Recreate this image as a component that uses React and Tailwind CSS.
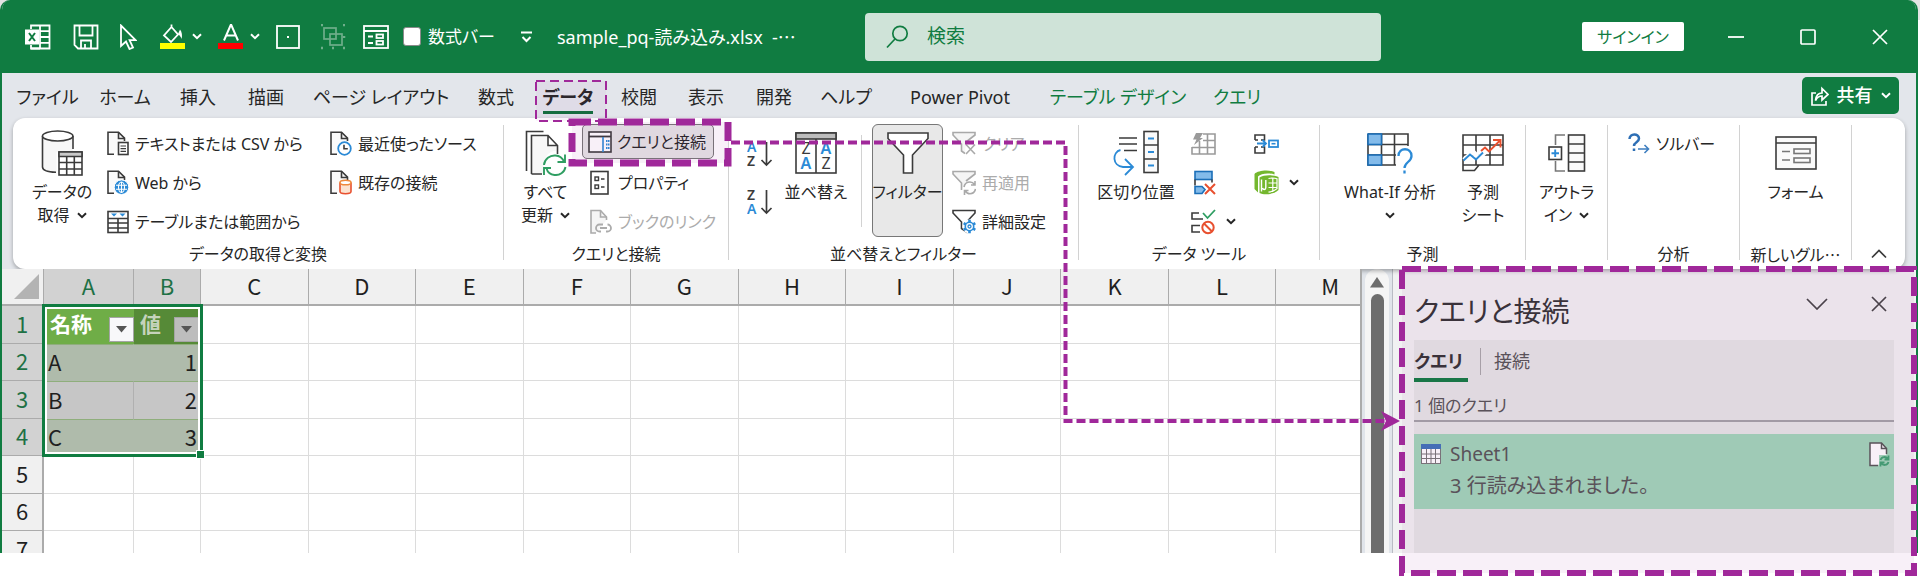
import React from "react";

const INK = "#3b3b3b";
const BLUE = "#2b8ad6";
const ORANGE = "#e8502f";
const PURPLE = "#a0289a";

/* ---------- shared drawing helpers ---------- */

function Svg({ w, h, children, className = "" }) {
  return (
    <svg
      width={w}
      height={h}
      viewBox={`0 0 ${w} ${h}`}
      fill="none"
      stroke={INK}
      strokeWidth="1.6"
      className={`block shrink-0 ${className}`}
      aria-hidden="true"
    >
      {children}
    </svg>
  );
}

function Chevron({ className = "" }) {
  return (
    <svg width="10" height="7" viewBox="0 0 10 7" fill="none" stroke="currentColor" strokeWidth="2" className={`inline-block shrink-0 ${className}`} aria-hidden="true">
      <path d="M1 1.2l4 4 4-4" />
    </svg>
  );
}

function DocOutline() {
  return (
    <>
      <path d="M7 23.2H1V1.2h10.5l6 6V10" fill="#fafafa" />
      <path d="M11.500 1.200V7.500H17.500" />
    </>
  );
}

/* ---------- title bar icons ---------- */

const ExcelIcon = () => (
  <Svg w={26} h={26}>
    <g stroke="#fff" strokeWidth="1.8">
      <path d="M6 5V1.500h18.500v23H6V21" />
      <path d="M15 1.500v23M15 7.200h9.500M15 13h9.500M15 18.800h9.500M6 24.500h9" />
      <rect x="0" y="5.500" width="14" height="15" fill="#fff" stroke="none" />
      <path d="M4 9l6 8M10 9l-6 8" stroke="#107c41" strokeWidth="2" />
    </g>
  </Svg>
);
const SaveIcon = () => (
  <Svg w={26} h={26}>
    <path d="M1.500 1.500h23v23H5l-3.500-3.500zM6.500 1.500v10h13v-10M8 24.500v-8h10v8M12 24v-4" stroke="#fff" strokeWidth="1.800" />
  </Svg>
);
const CursorIcon = () => (
  <Svg w={18} h={26}>
    <path d="M2 1.500v20.500l5-4.500 3.500 7.500 3.500-1.500-3.400-7.400h6z" stroke="#fff" strokeWidth="1.800" />
  </Svg>
);
const BucketIcon = () => (
  <Svg w={26} h={26}>
    <path d="M11.500 3L4 11.500l7 6.500 7-7.500zM11.500 3V0.500" stroke="#fff" strokeWidth="1.800" />
    <path d="M18 10l2-4.500c2 2 2.500 6.500 1.500 9.500-.5-2-2-4-3.500-5z" fill="#fff" stroke="none" />
    <rect x="0" y="19" width="25" height="6" fill="#ff0" stroke="none" />
  </Svg>
);
const FontColorIcon = () => (
  <Svg w={26} h={26}>
    <path d="M6 16.500L12.700 1h.600L20 16.500M8.200 11.500h9.600" stroke="#fff" strokeWidth="2" />
    <rect x="0" y="19" width="25" height="6" fill="#f00" stroke="none" />
  </Svg>
);
const CellIcon = () => (
  <Svg w={24} h={24}>
    <rect x="1" y="1" width="22" height="22" stroke="#fff" strokeWidth="1.800" />
    <rect x="11" y="11" width="2" height="2" fill="#fff" stroke="none" />
  </Svg>
);
const GroupIcon = () => (
  <Svg w={26} h={26}>
    <g stroke="#6fae8b" strokeWidth="1.700">
      <rect x="4" y="4" width="12" height="11" />
      <rect x="10" y="10" width="12" height="11" />
      <path d="M1 1h2M23 1h2M1 24h2M23 24h2M12 24h2M24 12v2" strokeWidth="2.500" />
    </g>
  </Svg>
);
const FormTinyIcon = () => (
  <Svg w={26} h={24}>
    <g stroke="#fff" strokeWidth="1.800">
      <rect x="1" y="1" width="24" height="22" />
      <path d="M1 6h24M5 11.500h5M5 18h5" />
      <rect x="13.500" y="9.500" width="6.500" height="3.500" />
      <rect x="13.500" y="16" width="6.500" height="3.500" />
    </g>
  </Svg>
);

/* ---------- ribbon icons ---------- */

const DatabaseIcon = () => (
  <Svg w={42} h={46}>
    <path d="M1.500 6v31c0 3.500 6 5.300 14 5.300V22H32V6" fill="#f7f7f7" stroke="none" />
    <path d="M1.500 6v31c0 3 5.500 5 13.500 5.300M32 6v13" />
    <ellipse cx="16.700" cy="6" rx="15.200" ry="5" fill="#fff" />
    <rect x="18" y="22" width="23" height="23" fill="#fff" />
    <path d="M18 22h23v4.500H18z" fill="#c9c9c9" />
    <path d="M18 32.500h23M18 39h23M25.700 26.500V45M33.300 26.500V45" />
  </Svg>
);
const DocTextIcon = () => (
  <Svg w={22} h={25}>
    <DocOutline />
    <rect x="11.500" y="11.500" width="9.500" height="12" fill="#fff" />
    <path d="M13.500 15h5.500M13.500 17.700h5.500M13.500 20.400h5.500" strokeWidth="1.200" />
  </Svg>
);
const DocWebIcon = () => (
  <Svg w={22} h={25}>
    <DocOutline />
    <circle cx="14.500" cy="17.200" r="7.300" fill={BLUE} stroke="#fff" strokeWidth="1" />
    <ellipse cx="14.500" cy="17.200" rx="3" ry="5.200" stroke="#fff" strokeWidth="1.100" />
    <path d="M9 15.300h11M9 19.200h11M14.500 12v10.400" stroke="#fff" strokeWidth="1.100" />
  </Svg>
);
const TableRangeIcon = () => (
  <Svg w={22} h={24}>
    <rect x="1" y="1.500" width="20" height="21" fill="#fff" />
    <path d="M1 8.500h20M1 13h20M1 18h20M11 8.500v14" />
    <path d="M4 3.500h6L7 6.500zM12.500 3.500h6l-3 3z" fill={BLUE} stroke="none" />
  </Svg>
);
const DocClockIcon = () => (
  <Svg w={22} h={25}>
    <DocOutline />
    <circle cx="14.500" cy="17.500" r="6.300" fill="#fff" stroke={BLUE} strokeWidth="1.800" />
    <path d="M14 13.800v4h3.800" />
  </Svg>
);
const DocDbIcon = () => (
  <Svg w={22} h={25}>
    <DocOutline />
    <path d="M10 12.500v9c0 3 11 3 11 0v-9" fill="#fbe3d0" stroke={ORANGE} />
    <ellipse cx="15.500" cy="12.500" rx="5.500" ry="2.300" fill="#fff" stroke="#ee8a3c" />
  </Svg>
);
const RefreshAllIcon = () => (
  <Svg w={42} h={46}>
    <path d="M8 7h15v9h8v5c-8 0-13 6-12 22H8z" fill="#f7f7f7" stroke="none" />
    <path d="M1.500 41V1.500h17M6.500 44V5.500H23l9.500 10V24M6.500 44H17M23 5.500v10h9.500" />
    <g stroke="#2f9e62" strokeWidth="1.900">
      <path d="M19 35c.5-6 6-10 11.500-9.500 4 .3 7 2.500 8.500 6M40 24.500v7.500h-7.500" />
      <path d="M40.500 37c-1 5.500-6 8.500-11 8-4-.4-7-3-8-6.500M19 45v-7h7" />
    </g>
  </Svg>
);
const QueryPaneIcon = () => (
  <Svg w={24} h={22}>
    <rect x="1" y="1" width="22" height="20" fill="#fff" />
    <path d="M1 5.500h22" strokeWidth="1.800" />
    <path d="M15 6v15" stroke={BLUE} />
    <path d="M18 10h3.500M18 13.500h3.500M18 17h3.500" stroke={BLUE} strokeWidth="1.800" strokeDasharray="1.500 .5" />
  </Svg>
);
const PropertiesIcon = () => (
  <Svg w={24} h={26}>
    <rect x="3" y="1.500" width="17" height="22.500" fill="#fff" />
    <rect x="7" y="7" width="3.500" height="3.500" strokeWidth="1.400" />
    <rect x="7" y="15" width="3.500" height="3.500" strokeWidth="1.400" />
    <path d="M13 9h3.500M13 17h3.500" />
  </Svg>
);
const BookLinkIcon = () => (
  <Svg w={24} h={26}>
    <g stroke="#ababab">
      <path d="M8 24H3V1.500h9.500l6 6.500V11" fill="#f5f5f5" />
      <path d="M12.500 1.500V8h6" />
      <path d="M13 22.500h-1.500a3.500 3.500 0 010-7H15M18 22.500h1.500a3.500 3.500 0 000-7M12 19h7" strokeWidth="1.800" />
    </g>
  </Svg>
);
const SortAZ = ({ flip = false }) => (
  <svg width="26" height="34" viewBox="0 0 26 34" fill="none" className="block" aria-hidden="true">
    <text x="0" y="15" fontSize="14" fontFamily="Noto Sans, sans-serif" fontWeight="600" fill={flip ? INK : BLUE}>{flip ? "Z" : "A"}</text>
    <text x="0" y="29" fontSize="14" fontFamily="Noto Sans, sans-serif" fontWeight="600" fill={flip ? BLUE : INK}>{flip ? "A" : "Z"}</text>
    <path d="M19.500 5v22.500M14.500 23l5 5 5-5" stroke={INK} strokeWidth="1.700" />
  </svg>
);
const SortDialogIcon = () => (
  <svg width="42" height="42" viewBox="0 0 42 42" fill="none" stroke={INK} strokeWidth="1.600" className="block" aria-hidden="true">
    <rect x="1" y="1" width="40" height="40" fill="#fff" />
    <rect x="1" y="1" width="40" height="6" fill="#bdbdbd" />
    <path d="M21 7v34" />
    <g stroke="none" fontSize="16" fontFamily="Noto Sans, sans-serif" textAnchor="middle">
      <text x="11" y="22" fill={INK}>Z</text>
      <text x="11" y="37" fill={BLUE} fontWeight="600">A</text>
      <text x="31" y="22" fill={BLUE} fontWeight="600">A</text>
      <text x="31" y="37" fill={INK}>Z</text>
    </g>
  </svg>
);
const FunnelBig = () => (
  <Svg w={42} h={42}>
    <path d="M1 1h40v5.500L25.500 23v18h-9V23L1 6.500z" fill="#fff" />
  </Svg>
);
const funnelPath = "M1 1.500h22v2.500l-8.500 9V23l-5-3.500V13L1 4z";
const FunnelClear = () => (
  <Svg w={24} h={25}>
    <path d="M14 11l9-7V1.500H1V4l8.500 9v7l3.500 2.500" stroke="#a9a9a9" fill="#f5f5f5" />
    <path d="M14 13.500l9 9.500M23 13.500L14 23" stroke="#a9a9a9" />
  </Svg>
);
const FunnelReapply = () => (
  <Svg w={24} h={25}>
    <g stroke="#a9a9a9">
      <path d="M14 11l9-7V1.500H1V4l8.500 9v7" fill="#f5f5f5" />
      <path d="M12 17c.5-3 3-5 6-5 2 0 3.500 1 4.500 2.500M23 11v4h-4M23.500 19c-.6 3-3 4.700-5.500 4.700-2 0-3.700-1-4.700-2.700M12.500 25v-4.500h4" />
    </g>
  </Svg>
);
const FunnelGear = () => (
  <Svg w={24} h={25}>
    <path d={funnelPath} fill="#fff" />
    <circle cx="17.500" cy="17.500" r="7" fill="#fff" stroke="none" />
    <circle cx="17.500" cy="17.500" r="4.200" stroke={BLUE} strokeWidth="1.600" />
    <circle cx="17.500" cy="17.500" r="1.500" stroke={BLUE} strokeWidth="1.300" />
    <path d="M17.500 10.800v2.400M17.500 21.800v2.400M11.700 14.100l2 1.200M21.300 19.700l2 1.200M11.700 20.900l2-1.200M21.300 15.300l2-1.200" stroke={BLUE} strokeWidth="2.600" />
  </Svg>
);
const TextToColumnsIcon = () => (
  <Svg w={46} h={46}>
    <rect x="31" y="1.500" width="14" height="41" fill="#fafafa" />
    <path d="M31 15h14M31 29h14M6 8h18M6 14h18M11 20.500h13" />
    <path d="M35 8.500h6M35 22h6M35 35.500h6" stroke={BLUE} strokeWidth="1.800" />
    <path d="M7.500 20C-1 22-1 36 10 37h9M12 29l8 8-8 8" stroke={BLUE} strokeWidth="1.800" />
  </Svg>
);
const FlashFillIcon = () => (
  <Svg w={25} h={24}>
    <g stroke="#9a9a9a">
      <path d="M12 2h12v20H1V15M1 15.500h23M8.500 9v13M16.500 2v20M12 8.500h12" fill="none" />
      <path d="M5 1h7L9 6h3L3 13l2.500-5.500H2z" fill="#9a9a9a" stroke="none" />
    </g>
  </Svg>
);
const RemoveDupIcon = () => (
  <Svg w={25} h={26}>
    <rect x="4" y="1.500" width="17" height="8" fill="#83bbea" stroke="#1b6fb8" />
    <path d="M4 9.500v6M21 9.500v3" />
    <path d="M4 16.500h7l3 3-3 4H4z" fill="#83bbea" stroke="#1b6fb8" />
    <path d="M14 14l10 10M24 14L14 24" stroke={ORANGE} strokeWidth="2" />
  </Svg>
);
const ValidationIcon = () => (
  <Svg w={25} h={26}>
    <path d="M8 4H1v6h11M9 16.500H1v6.500h8" />
    <path d="M12 4l4.500 5L24 1" stroke="#2f9e62" strokeWidth="1.800" />
    <circle cx="17" cy="18.500" r="5.700" stroke={ORANGE} strokeWidth="2" />
    <path d="M13 14.500l8 8" stroke={ORANGE} strokeWidth="2" />
  </Svg>
);
const ConsolidateIcon = () => (
  <Svg w={25} h={22}>
    <path d="M1 7V2h9.500v5H7M1 14v6h9.500v-6H7M1 7h3M1 14h3" />
    <path d="M3 10.500h8.500M8.500 7l3.500 3.500L8.500 14" stroke={BLUE} strokeWidth="1.800" />
    <rect x="15" y="7.500" width="9" height="6.500" stroke={BLUE} strokeWidth="1.800" />
    <path d="M17.500 10.700h4" stroke={BLUE} />
  </Svg>
);
const DataModelIcon = () => (
  <Svg w={25} h={25}>
    <path d="M0.500 4C4 .5 14-.5 20.500 2v2.500C14 2.500 7 3.500 4 6.500v16L0.500 19z" fill="#74b72e" stroke="none" />
    <path d="M5.500 7.500C10 4.500 19 4.500 24.500 7v13c-4 4-14 5.500-19 3z" fill="#74b72e" stroke="none" />
    <path d="M14.500 8.500c3-.7 6-.7 8.500.2v10c-2 2-5 3-8.500 3.500M14.500 13h8.500M14.500 17.500h8.500M18.800 8v14" stroke="#fff" strokeWidth="1.200" />
    <path d="M7.500 9.500v12M11.800 10v7.500c0 2.500-2.800 2.500-3.300.5" stroke="#fff" strokeWidth="1.400" />
  </Svg>
);
const WhatIfIcon = () => (
  <Svg w={46} h={42}>
    <path d="M1 2h40v12M1 2v31h29M1 12.500h40M1 23h28M14.500 2v31M27.500 2v31" />
    <rect x="1" y="2" width="13.500" height="10.500" fill="#83bbea" stroke="#1b6fb8" />
    <rect x="1" y="23" width="13.500" height="10" fill="#83bbea" stroke="#1b6fb8" />
    <rect x="29" y="15" width="17" height="27" fill="#fff" stroke="none" />
    <path d="M31.500 24c0-9 13-9 13 0 0 6-7 6-7 12M37.500 38.500v3" stroke={BLUE} strokeWidth="2.300" />
  </Svg>
);
const ForecastIcon = () => (
  <Svg w={42} h={38}>
    <path d="M1 1h40v30H17l-4.500 5.500H1zM1 31h16M1 11h40M1 21h40M14 1v30M28 1v30" fill="none" />
    <path d="M2 26l9-8 6 6 6-6" stroke="#fff" strokeWidth="5" />
    <path d="M1.500 26.500l6.500-6 6 5 7-7" stroke={BLUE} strokeWidth="1.900" />
    <path d="M19 17l4-3.500 4 4L38 6.500M31 6h7.500v7.500" stroke={ORANGE} strokeWidth="1.900" />
  </Svg>
);
const OutlineIcon = () => (
  <Svg w={38} h={38}>
    <rect x="20.500" y="1" width="16" height="36" fill="#fafafa" />
    <path d="M20.500 10h16M20.500 19h16M20.500 28h16" />
    <path d="M17 1H7.500v10M7.500 27v10H17" stroke="#777" />
    <rect x="1" y="13" width="12.500" height="12.500" />
    <path d="M7.200 15.500v7.500M3.500 19.200H11" stroke={BLUE} strokeWidth="1.900" />
  </Svg>
);
const SolverIcon = () => (
  <Svg w={22} h={22}>
    <path d="M1.500 6c0-6 9.500-6 9.500-.5C11 9.500 6 9 6 13M6 15.500v2.500" stroke="#2e6fb5" strokeWidth="2.500" />
    <path d="M10 16h10M16.500 12l4 4-4 4" stroke="#3f7fc0" strokeWidth="1.600" />
  </Svg>
);
const FormIcon = () => (
  <Svg w={42} h={34}>
    <rect x="1" y="1" width="40" height="32" fill="#fafafa" />
    <path d="M1 7h40" />
    <path d="M7 15.500h8M7 24h8" stroke="#777" />
    <rect x="19" y="13" width="16" height="4.500" stroke="#777" />
    <rect x="19" y="22" width="16" height="4.500" stroke="#777" />
  </Svg>
);

/* ---------- title bar ---------- */

function IconButton({ label, className = "", children }) {
  return (
    <button type="button" aria-label={label} className={`flex shrink-0 items-center ${className}`}>
      {children}
    </button>
  );
}

function TitleBar() {
  return (
    <header className="flex h-[73px] items-center bg-[#107c41] pl-[23px] text-white">
      <div className="flex w-[840px] shrink-0 items-center">
        <IconButton label="Excel" className="w-[48px]"><ExcelIcon /></IconButton>
        <IconButton label="上書き保存" className="w-[46px]"><SaveIcon /></IconButton>
        <IconButton label="選択" className="w-[41px]"><CursorIcon /></IconButton>
        <IconButton label="塗りつぶしの色" className="w-[58px] gap-[6px]"><BucketIcon /><Chevron /></IconButton>
        <IconButton label="フォントの色" className="w-[58px] gap-[6px]"><FontColorIcon /><Chevron /></IconButton>
        <IconButton label="罫線" className="w-[44px]"><CellIcon /></IconButton>
        <IconButton label="グループ化" className="w-[43px]"><GroupIcon /></IconButton>
        <IconButton label="フォーム" className="w-[40px]"><FormTinyIcon /></IconButton>
        <label className="flex w-[118px] items-center gap-[7px] text-[17px] leading-6">
          <input type="checkbox" className="h-[19px] w-[18px] appearance-none rounded-[3px] border border-[#8a8a8a] bg-white" />
          <span>数式バー</span>
        </label>
        <IconButton label="カスタマイズ" className="w-[36px]">
          <svg width="11" height="12" viewBox="0 0 11 12" fill="none" stroke="#fff" strokeWidth="2" aria-hidden="true">
            <path d="M0 1.500h11M1.500 6l4 4 4-4" />
          </svg>
        </IconButton>
        <span className="whitespace-pre text-[18px] leading-6">
          sample_pq-読み込み.xlsx{"  "}-<span lang="ja" className="font-['Noto_Sans_CJK_JP',sans-serif]">⋯</span>
        </span>
      </div>
      <label className="flex h-12 w-[516px] items-center rounded-[4px] bg-[#cfe3d8] pl-[21px] text-[#107c41]">
        <svg width="23" height="24" viewBox="0 0 23 24" fill="none" stroke="#107c41" strokeWidth="1.700" aria-hidden="true">
          <circle cx="14" cy="8.500" r="7.200" />
          <path d="M9 14L1 22.500" />
        </svg>
        <input
          type="text"
          aria-label="検索"
          placeholder="検索"
          className="ml-[18px] min-w-0 flex-1 bg-transparent text-[19px] placeholder:text-[#107c41] placeholder:opacity-100 focus:outline-none"
        />
      </label>
      <div className="flex flex-1 items-center justify-end">
        <button type="button" className="h-[29px] w-[102px] rounded-[2px] bg-white text-[16px] leading-6 text-[#107c41]">サインイン</button>
        <IconButton label="最小化" className="ml-4 w-[72px] justify-center">
          <svg width="16" height="16" viewBox="0 0 16 16" stroke="#fff" strokeWidth="1.800" aria-hidden="true"><path d="M0 8h16" /></svg>
        </IconButton>
        <IconButton label="最大化" className="w-[72px] justify-center">
          <svg width="16" height="16" viewBox="0 0 16 16" fill="none" stroke="#fff" strokeWidth="1.700" aria-hidden="true"><rect x="1" y="1" width="14" height="14" rx="1" /></svg>
        </IconButton>
        <IconButton label="閉じる" className="w-[72px] justify-center">
          <svg width="16" height="16" viewBox="0 0 16 16" stroke="#fff" strokeWidth="1.700" aria-hidden="true"><path d="M1 1l14 14M15 1L1 15" /></svg>
        </IconButton>
      </div>
    </header>
  );
}

/* ---------- ribbon tabs ---------- */

const TABS = [
  { name: "ファイル", w: "w-[71px]" },
  { name: "ホーム", w: "w-[84px]" },
  { name: "挿入", w: "w-[62px]" },
  { name: "描画", w: "w-[74px]" },
  { name: "ページ レイアウト", w: "w-[156px]" },
  { name: "数式", w: "w-[74px]" },
  { name: "データ", w: "w-[70px]", active: true },
  { name: "校閲", w: "w-[72px]" },
  { name: "表示", w: "w-[62px]" },
  { name: "開発", w: "w-[74px]" },
  { name: "ヘルプ", w: "w-[70px]" },
  { name: "Power Pivot", w: "w-[158px]" },
  { name: "テーブル デザイン", w: "w-[158px]", context: true },
  { name: "クエリ", w: "w-[80px]", context: true },
];

function RibbonTabs() {
  return (
    <nav className="flex h-[45px] items-center justify-between pl-[10px] pr-[17px]">
      <div role="tablist" className="flex pt-[5px]">
        {TABS.map((t) => (
          <button
            key={t.name}
            type="button"
            role="tab"
            aria-selected={!!t.active}
            className={`flex shrink-0 justify-center whitespace-nowrap text-[18px] leading-7 ${t.w} ${t.context ? "text-[#107c41]" : "text-[#262626]"}`}
          >
            <span className={t.active ? "border-b-[3px] border-[#0f703b] font-bold" : "border-b-[3px] border-transparent"}>{t.name}</span>
          </button>
        ))}
      </div>
      <button type="button" className="flex h-[37px] w-[97px] items-center justify-center gap-2 rounded-[5px] bg-[#107c41] text-[18px] font-medium text-white">
        <svg width="18" height="20" viewBox="0 0 18 20" fill="none" stroke="#fff" strokeWidth="1.700" aria-hidden="true">
          <path d="M5 7H1v12h14v-4" />
          <path d="M4.500 14.500C5 9 8 7 11 7V2.500l6 6-6 5.500v-4c-3 0-5 1.500-6.500 4.500z" />
        </svg>
        共有
        <Chevron />
      </button>
    </nav>
  );
}

/* ---------- ribbon body ---------- */

function Group({ label, w, content = "", children }) {
  return (
    <section className={`flex shrink-0 flex-col ${w}`}>
      <div className={`flex h-[117px] ${content}`}>{children}</div>
      <div className="whitespace-nowrap text-center text-[16px] leading-[26px]">{label}</div>
    </section>
  );
}

const Sep = () => <div className="mt-px h-[135px] w-px shrink-0 bg-[#d2d2d2]" />;

function BigButton({ icon, lines, chevron, w }) {
  return (
    <button type="button" className={`flex shrink-0 flex-col items-center self-start ${w}`}>
      <span className="flex h-[57px] items-center">{icon}</span>
      {lines.map((l, i) => (
        <span key={l} className="flex items-center gap-[7px] whitespace-nowrap text-[16px] leading-[23px]">
          {l}
          {chevron === "inline" && i === lines.length - 1 && <Chevron />}
        </span>
      ))}
      {chevron === "below" && <span className="flex h-[23px] items-center"><Chevron /></span>}
    </button>
  );
}

function SmallButton({ icon, label, chevron, muted, className = "" }) {
  return (
    <button type="button" aria-label={label} className={`flex h-[39px] items-center gap-[6px] whitespace-nowrap text-[16px] ${muted ? "text-[#ababab]" : ""} ${className}`}>
      {icon}
      {label && <span>{label}</span>}
      {chevron && <Chevron />}
    </button>
  );
}

function ToolButton({ icon, name, chevron }) {
  return (
    <button type="button" aria-label={name} className="flex h-[39px] items-center gap-[10px]">
      {icon}
      {chevron && <Chevron />}
    </button>
  );
}

function Ribbon() {
  return (
    <div className="relative ml-[11px] mr-[11px] flex h-[151px] rounded-[12px] bg-white pt-[6px] text-[#262626] shadow-[0_2px_4px_rgba(0,0,0,0.3)]">
      <Group label="データの取得と変換" w="w-[490px]" content="pl-[9px]">
        <BigButton icon={<DatabaseIcon />} lines={["データの", "取得"]} chevron="inline" w="w-[80px]" />
        <div className="ml-[5px] w-[223px]">
          <SmallButton icon={<DocTextIcon />} label="テキストまたは CSV から" />
          <SmallButton icon={<DocWebIcon />} label="Web から" />
          <SmallButton icon={<TableRangeIcon />} label="テーブルまたは範囲から" />
        </div>
        <div>
          <SmallButton icon={<DocClockIcon />} label="最近使ったソース" />
          <SmallButton icon={<DocDbIcon />} label="既存の接続" />
        </div>
      </Group>
      <Sep />
      <Group label="クエリと接続" w="w-[224px]" content="pl-[5px]">
        <BigButton icon={<RefreshAllIcon />} lines={["すべて", "更新"]} chevron="inline" w="w-[73px]" />
        <div>
          <button type="button" className="mb-[4px] flex h-[35px] w-[132px] items-center gap-[5px] whitespace-nowrap rounded-[5px] border border-[#777] bg-[#e6e6e6] pl-[5px] text-[16px]">
            <QueryPaneIcon />
            <span>クエリと接続</span>
          </button>
          <SmallButton icon={<PropertiesIcon />} label="プロパティ" className="pl-[6px]" />
          <SmallButton icon={<BookLinkIcon />} label="ブックのリンク" muted className="pl-[6px]" />
        </div>
      </Group>
      <Sep />
      <Group label="並べ替えとフィルター" w="w-[349px]" content="pl-[18px]">
        <div className="flex flex-col gap-[14px] pt-[13px]">
          <button type="button" aria-label="昇順"><SortAZ /></button>
          <button type="button" aria-label="降順"><SortAZ flip /></button>
        </div>
        <BigButton icon={<SortDialogIcon />} lines={["並べ替え"]} w="ml-[6px] w-[74px]" />
        <div className="ml-2 mt-[11px] h-[92px] w-px bg-[#d2d2d2]" />
        <div className="ml-[10px] h-[113px] w-[71px] shrink-0 rounded-[6px] bg-[#e8e8e8] outline-1 -outline-offset-1 outline-[#777]">
          <BigButton icon={<FunnelBig />} lines={["フィルター"]} w="w-full" />
        </div>
        <div className="ml-[9px]">
          <SmallButton icon={<FunnelClear />} label="クリア" muted />
          <SmallButton icon={<FunnelReapply />} label="再適用" muted />
          <SmallButton icon={<FunnelGear />} label="詳細設定" />
        </div>
      </Group>
      <Sep />
      <Group label="データ ツール" w="w-[240px]" content="pl-3">
        <BigButton icon={<TextToColumnsIcon />} lines={["区切り位置"]} w="w-[90px]" />
        <div className="ml-[10px] w-[63px]">
          <ToolButton icon={<FlashFillIcon />} name="フラッシュ フィル" />
          <ToolButton icon={<RemoveDupIcon />} name="重複の削除" />
          <ToolButton icon={<ValidationIcon />} name="データの入力規則" chevron />
        </div>
        <div>
          <ToolButton icon={<ConsolidateIcon />} name="統合" />
          <ToolButton icon={<DataModelIcon />} name="データ モデル" chevron />
        </div>
      </Group>
      <Sep />
      <Group label="予測" w="w-[205px]" content="pl-[14px]">
        <BigButton icon={<WhatIfIcon />} lines={["What-If 分析"]} chevron="below" w="w-[112px]" />
        <BigButton icon={<ForecastIcon />} lines={["予測", "シート"]} w="ml-[7px] w-[60px]" />
      </Group>
      <Sep />
      <Group label="" w="w-[81px]">
        <BigButton icon={<OutlineIcon />} lines={["アウトラ", "イン"]} chevron="inline" w="w-full" />
      </Group>
      <Sep />
      <Group label="分析" w="w-[131px]" content="pl-5">
        <SmallButton icon={<SolverIcon />} label="ソルバー" />
      </Group>
      <Sep />
      <Group label={<>新しいグル<span lang="ja" className="font-['Noto_Sans_CJK_JP',sans-serif]">⋯</span></>} w="w-[111px]">
        <BigButton icon={<FormIcon />} lines={["フォーム"]} w="w-full" />
      </Group>
      <Sep />
      <div className="flex flex-1 items-end justify-center pb-[10px]">
        <button type="button" aria-label="リボンを折りたたむ">
          <svg width="16" height="10" viewBox="0 0 16 10" fill="none" stroke={INK} strokeWidth="1.700" className="block" aria-hidden="true"><path d="M1 8.500l7-7 7 7" /></svg>
        </button>
      </div>
    </div>
  );
}

/* ---------- worksheet ---------- */

const COLUMNS = ["C", "D", "E", "F", "G", "H", "I", "J", "K", "L", "M"];
const DATA = { 2: ["A", "1"], 3: ["B", "2"], 4: ["C", "3"] };

function HeaderCell({ text, dark }) {
  return (
    <th scope="col" className={`p-0 ${dark ? "bg-[#568a37]" : "bg-[#6fad47]"}`}>
      <div className={`flex h-[37px] items-start justify-between pl-[6px] text-[21px] leading-[33px] ${dark ? "pr-[2px] text-[#c5d3bc]" : "text-white"}`}>
        {text}
        <button
          type="button"
          aria-label={`${text} フィルター`}
          className={`mt-[10px] flex h-[25px] w-[25px] items-center justify-center border border-[#a5a5a5] ${dark ? "bg-[#bdbdbd]" : "bg-[#f8f8fa]"}`}
        >
          <svg width="11" height="7" viewBox="0 0 11 7" className="block" aria-hidden="true"><path d="M0 0h11L5.500 6.500z" fill="#555" /></svg>
        </button>
      </div>
    </th>
  );
}

function Sheet() {
  return (
    <div className="relative h-[284px] min-w-0 flex-1 overflow-hidden border-r-2 border-[#ababab] bg-white font-['Noto_Sans_CJK_JP','Noto_Sans',sans-serif]">
      <table className="w-[calc(100%+24px)] table-fixed border-separate border-spacing-0 text-[22px] leading-[30px] text-[#1f1f1f]">
        <colgroup>
          <col className="w-[42px]" />
          <col className="w-[90px]" />
          <col className="w-[67px]" />
          {COLUMNS.map((c) => <col key={c} />)}
        </colgroup>
        <thead>
          <tr className="h-[37px]">
            <th className="border-b-2 border-r border-[#ababab] bg-[#f0f0f0] p-0">
              <svg width="25" height="25" viewBox="0 0 25 25" className="ml-auto mr-1 block" aria-hidden="true"><path d="M25 0v25H0z" fill="#b3b3b3" /></svg>
            </th>
            {["A", "B"].map((c) => (
              <th key={c} scope="col" className="border-b-2 border-r border-[#ababab] bg-[#d2d2d2] px-0 pb-[3px] pt-0 font-normal text-[#1e7145]">{c}</th>
            ))}
            {COLUMNS.map((c) => (
              <th key={c} scope="col" className="border-b-2 border-r border-[#ababab] bg-[#f0f0f0] px-0 pb-[3px] pt-0 font-normal last:border-r-0">{c}</th>
            ))}
          </tr>
        </thead>
        <tbody>
          {[1, 2, 3, 4, 5, 6, 7].map((r) => {
            const band = r === 3 ? "bg-[#c6c6c6] border-[#b0b0b0]" : "bg-[#afbbab] border-[#afbbab]";
            return (
              <tr key={r} className="h-[37px] odd:h-[38px]">
                <th scope="row" className={`border-b border-r-2 border-[#ababab] px-0 pb-[4px] pt-0 font-normal ${r < 5 ? "bg-[#d2d2d2] text-[#1e7145]" : "bg-[#f0f0f0]"}`}>{r}</th>
                {r === 1 && (<><HeaderCell text="名称" /><HeaderCell text="値" dark /></>)}
                {DATA[r] && (
                  <>
                    <td className={`border-r border-t border-t-[#8fae7c] pb-[4px] pl-1 pr-0 pt-0 ${band}`}>{DATA[r][0]}</td>
                    <td className={`border-t border-t-[#8fae7c] pb-[4px] pl-0 pr-[4px] pt-0 text-right ${band}`}>{DATA[r][1]}</td>
                  </>
                )}
                {r > 4 && (
                  <>
                    <td className="border-b border-r border-[#dcdcdc] p-0" />
                    <td className="border-b border-r border-[#dcdcdc] p-0" />
                  </>
                )}
                {COLUMNS.map((c) => <td key={c} className="border-b border-r border-[#dcdcdc] p-0 last:border-r-0" />)}
              </tr>
            );
          })}
        </tbody>
      </table>
      <div className="pointer-events-none absolute left-[40px] top-[35px] h-[153px] w-[161px] border-[3px] border-[#107c41]">
        <div className="h-full w-full border-2 border-white" />
        <div className="absolute -bottom-[5px] -right-[5px] h-[9px] w-[9px] border border-white bg-[#107c41]" />
      </div>
    </div>
  );
}

function ScrollBar() {
  return (
    <div className="flex w-[31px] shrink-0 justify-center border-r border-[#b9bcc4] bg-[#e0e4ea]">
      <div className="flex w-6 flex-col items-center rounded-t-full bg-[#f5f5f5] pt-2">
        <svg width="14" height="11" viewBox="0 0 14 11" className="block" aria-hidden="true"><path d="M7 0l7 10.500H0z" fill="#6d6d6d" /></svg>
        <div className="mt-[6px] w-[13px] flex-1 rounded-t-full bg-[#6d6d6d]" />
      </div>
    </div>
  );
}

/* ---------- queries pane ---------- */

function QueriesPane() {
  return (
    <aside className="flex w-[523px] shrink-0 flex-col bg-[#f1f1f2] pl-[21px] pr-[22px] text-[#333]">
      <div className="flex h-[71px] items-center justify-between pb-[2px] pt-[14px]">
        <h2 className="text-[28px] leading-10">クエリと接続</h2>
        <div className="flex items-center gap-[43px] pb-[14px] pr-[7px]">
          <button type="button" aria-label="作業ウィンドウ オプション">
            <svg width="22" height="12" viewBox="0 0 22 12" fill="none" stroke="#444" strokeWidth="1.700" className="block" aria-hidden="true"><path d="M1 1l10 10L21 1" /></svg>
          </button>
          <button type="button" aria-label="閉じる">
            <svg width="16" height="16" viewBox="0 0 16 16" stroke="#444" strokeWidth="1.700" className="block" aria-hidden="true"><path d="M1 1l14 14M15 1L1 15" /></svg>
          </button>
        </div>
      </div>
      <div className="flex-1 bg-[#e6e7e6]">
        <div role="tablist" className="flex items-start pt-2 text-[18px] leading-[27px]">
          <button type="button" role="tab" aria-selected="true" className="w-[54px] whitespace-nowrap border-b-4 border-[#107c41] pb-[3px] text-left font-bold">クエリ</button>
          <div className="ml-3 h-[27px] w-px bg-[#a8a8a8]" />
          <button type="button" role="tab" aria-selected="false" className="ml-[13px] text-[#555]">接続</button>
        </div>
        <p className="border-b-2 border-[#a3a3a6] pb-[2px] pt-[12px] text-[17px] leading-6 text-[#555]">1 個のクエリ</p>
        <div className="mt-3 flex h-[75px] items-start bg-[#a0d7b8] pl-[7px] pr-1 pt-2 text-[#555]">
          <svg width="20" height="20" viewBox="0 0 20 20" fill="none" stroke="#777" className="mt-[2px] block shrink-0" aria-hidden="true">
            <rect x="0.500" y="0.500" width="19" height="19" fill="#fff" />
            <rect x="0" y="0" width="20" height="5" fill="#3f74b8" stroke="none" />
            <path d="M1 10h18M1 14.500h18M5.500 5v14M10 5v14M14.500 5v14" />
          </svg>
          <div className="ml-[9px] flex-1">
            <div className="text-[19px] leading-6">Sheet1</div>
            <div className="mt-1 text-[20px] leading-8">3 行読み込まれました。</div>
          </div>
          <svg width="21" height="25" viewBox="0 0 21 25" fill="none" stroke="#555" strokeWidth="1.500" className="block" aria-hidden="true">
            <path d="M9 23.500H1V1h11.500l5 5.500V12" fill="#fff" />
            <path d="M12.500 1v5.500h5" />
            <rect x="10" y="13" width="11" height="12" fill="#a0d7b8" stroke="none" />
            <path d="M11.500 18c1-3.500 5.500-4 7.500-1M19.500 13.500v4h-4M19.500 20c-1 3.500-5.500 4-7.500 1M11.500 24.500v-4h4" stroke="#3fa372" strokeWidth="1.800" />
          </svg>
        </div>
      </div>
    </aside>
  );
}

/* ---------- guide marks drawn over the window ---------- */

function Callouts() {
  return (
    <svg width="1920" height="580" viewBox="0 0 1920 580" fill="none" stroke={PURPLE} className="pointer-events-none absolute left-0 top-0" aria-hidden="true">
      <rect x="536" y="81" width="70" height="40" fill={PURPLE} fillOpacity="0.05" strokeWidth="2" strokeDasharray="9 5" />
      <rect x="572" y="122" width="156" height="41" fill={PURPLE} fillOpacity="0.07" strokeWidth="7" strokeDasharray="19 7" />
      <path d="M731 142.500H1065.500V421H1392" strokeWidth="4" strokeDasharray="9 4" />
      <path d="M1381 411l19 10-19 10 5-10z" fill={PURPLE} stroke="none" />
      <rect x="1402" y="269" width="512" height="304" fill={PURPLE} fillOpacity="0.07" strokeWidth="6" strokeDasharray="19 7" />
    </svg>
  );
}

export default function App() {
  return (
    <div className="relative min-h-[580px] overflow-hidden bg-white font-['Noto_Sans','Noto_Sans_CJK_JP',sans-serif] [font-feature-settings:'palt']">
      <div className="bg-[linear-gradient(#e4e4e4_0_20px,#fff_20px)] pr-[2px]">
        <div className="overflow-hidden rounded-t-[10px] border-x-2 border-[#107c41] bg-[#e3e6eb]">
          <TitleBar />
          <RibbonTabs />
          <Ribbon />
          <main className="flex">
            <Sheet />
            <ScrollBar />
            <QueriesPane />
          </main>
        </div>
      </div>
      <Callouts />
    </div>
  );
}
